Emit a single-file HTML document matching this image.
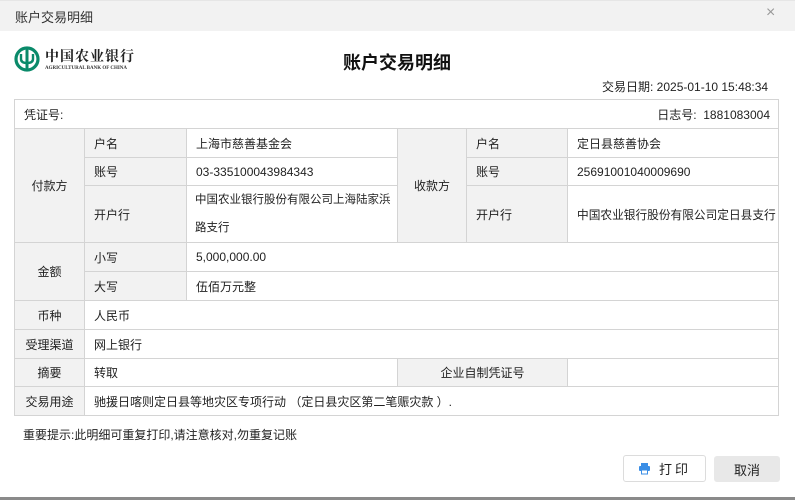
<!DOCTYPE html>
<html><head><meta charset="utf-8"><style>
*{margin:0;padding:0;box-sizing:border-box}
body{width:795px;height:500px;background:#fff;font-family:"Liberation Sans","Noto Sans CJK SC",sans-serif;font-size:12px;color:#222;position:relative;overflow:hidden}
.a{position:absolute}
.c{position:absolute;border:1px solid #d4d4d4;display:flex;align-items:center;padding-left:9px;margin:-1px 0 0 -1px;white-space:nowrap}
.g{background:#f2f2f2}
.ctr{justify-content:center;padding-left:0}
</style></head><body>
<div class="a" style="left:0;top:0;width:795px;height:31px;background:#f2f2f2;border-top:1px solid #e6e6e6"></div>
<div class="a" style="left:15px;top:7px;font-size:13px;color:#333">账户交易明细</div>
<div class="a" style="left:766px;top:4px;font-size:16px;color:#999">×</div>
<svg class="a" style="left:14px;top:46px" width="26" height="26" viewBox="0 0 26 26"><circle cx="13" cy="13" r="11" fill="none" stroke="#0a8a6a" stroke-width="3.2"/><rect x="11.5" y="2" width="3" height="22" fill="#0a8a6a"/><path d="M7 8v5q0 4 6 4q6 0 6-4V8" fill="none" stroke="#0a8a6a" stroke-width="2.4"/></svg>
<div class="a" style="left:45px;top:46px;font-size:14px;font-weight:bold;font-family:'Noto Serif CJK SC',serif;letter-spacing:1px;color:#222">中国农业银行</div>
<div class="a" style="left:45px;top:66px;font-size:5px;font-family:'Liberation Serif',serif;color:#333;font-weight:bold">AGRICULTURAL BANK OF CHINA</div>
<div class="a" style="left:343px;top:49px;font-size:18px;font-weight:bold;color:#111">账户交易明细</div>
<div class="a" style="left:602px;top:78px;font-size:12px">交易日期: 2025-01-10 15:48:34</div>
<div class="c" style="left:15px;top:100px;width:765px;height:30px;justify-content:space-between;padding-right:8px">
<span>凭证号:</span><span>日志号: &nbsp;1881083004</span></div>
<div class="c g ctr" style="left:15px;top:129px;width:71px;height:115px">付款方</div>
<div class="c g" style="left:85px;top:129px;width:103px;height:30px">户名</div>
<div class="c g" style="left:85px;top:158px;width:103px;height:29px">账号</div>
<div class="c g" style="left:85px;top:186px;width:103px;height:58px">开户行</div>
<div class="c" style="left:187px;top:129px;width:212px;height:30px">上海市慈善基金会</div>
<div class="c" style="left:187px;top:158px;width:212px;height:29px">03-335100043984343</div>
<div class="c" style="left:187px;top:186px;width:212px;height:58px;line-height:28px;font-size:11.5px;padding-left:8px">中国农业银行股份有限公司上海陆家浜<br>路支行</div>
<div class="c g ctr" style="left:398px;top:129px;width:70px;height:115px">收款方</div>
<div class="c g" style="left:467px;top:129px;width:102px;height:30px">户名</div>
<div class="c g" style="left:467px;top:158px;width:102px;height:29px">账号</div>
<div class="c g" style="left:467px;top:186px;width:102px;height:58px">开户行</div>
<div class="c" style="left:568px;top:129px;width:212px;height:30px">定日县慈善协会</div>
<div class="c" style="left:568px;top:158px;width:212px;height:29px">25691001040009690</div>
<div class="c" style="left:568px;top:186px;width:212px;height:58px;font-size:11.7px">中国农业银行股份有限公司定日县支行</div>
<div class="c g ctr" style="left:15px;top:243px;width:71px;height:59px">金额</div>
<div class="c g" style="left:85px;top:243px;width:103px;height:30px">小写</div>
<div class="c g" style="left:85px;top:272px;width:103px;height:30px">大写</div>
<div class="c" style="left:187px;top:243px;width:593px;height:30px">5,000,000.00</div>
<div class="c" style="left:187px;top:272px;width:593px;height:30px">伍佰万元整</div>
<div class="c g ctr" style="left:15px;top:301px;width:71px;height:30px">币种</div>
<div class="c" style="left:85px;top:301px;width:695px;height:30px">人民币</div>
<div class="c g ctr" style="left:15px;top:330px;width:71px;height:30px">受理渠道</div>
<div class="c" style="left:85px;top:330px;width:695px;height:30px">网上银行</div>
<div class="c g ctr" style="left:15px;top:359px;width:71px;height:29px">摘要</div>
<div class="c" style="left:85px;top:359px;width:314px;height:29px">转取</div>
<div class="c g ctr" style="left:398px;top:359px;width:171px;height:29px">企业自制凭证号</div>
<div class="c" style="left:568px;top:359px;width:212px;height:29px"></div>
<div class="c g ctr" style="left:15px;top:387px;width:71px;height:30px">交易用途</div>
<div class="c" style="left:85px;top:387px;width:695px;height:30px">驰援日喀则定日县等地灾区专项行动 （定日县灾区第二笔赈灾款 ）.</div>
<div class="a" style="left:23px;top:426px">重要提示:此明细可重复打印,请注意核对,勿重复记账</div>
<div class="a" style="left:623px;top:455px;width:83px;height:27px;border:1px solid #dcdcdc;border-radius:3px;display:flex;align-items:center;justify-content:center;font-size:13px;letter-spacing:3px">
<svg width="13" height="13" viewBox="0 0 13 13" style="margin-right:8px"><rect x="3" y="1" width="7" height="3" fill="#3a8ee6"/><rect x="1" y="4" width="11" height="5" rx="1" fill="#3a8ee6"/><rect x="3.5" y="8" width="6" height="4" fill="#fff" stroke="#3a8ee6"/></svg>打印</div>
<div class="a" style="left:714px;top:456px;width:66px;height:26px;background:#e8e8e8;border-radius:3px;display:flex;align-items:center;justify-content:center;font-size:13px">取消</div>
<div class="a" style="left:0;top:497px;width:795px;height:3px;background:#8a8a8a"></div>
</body></html>
